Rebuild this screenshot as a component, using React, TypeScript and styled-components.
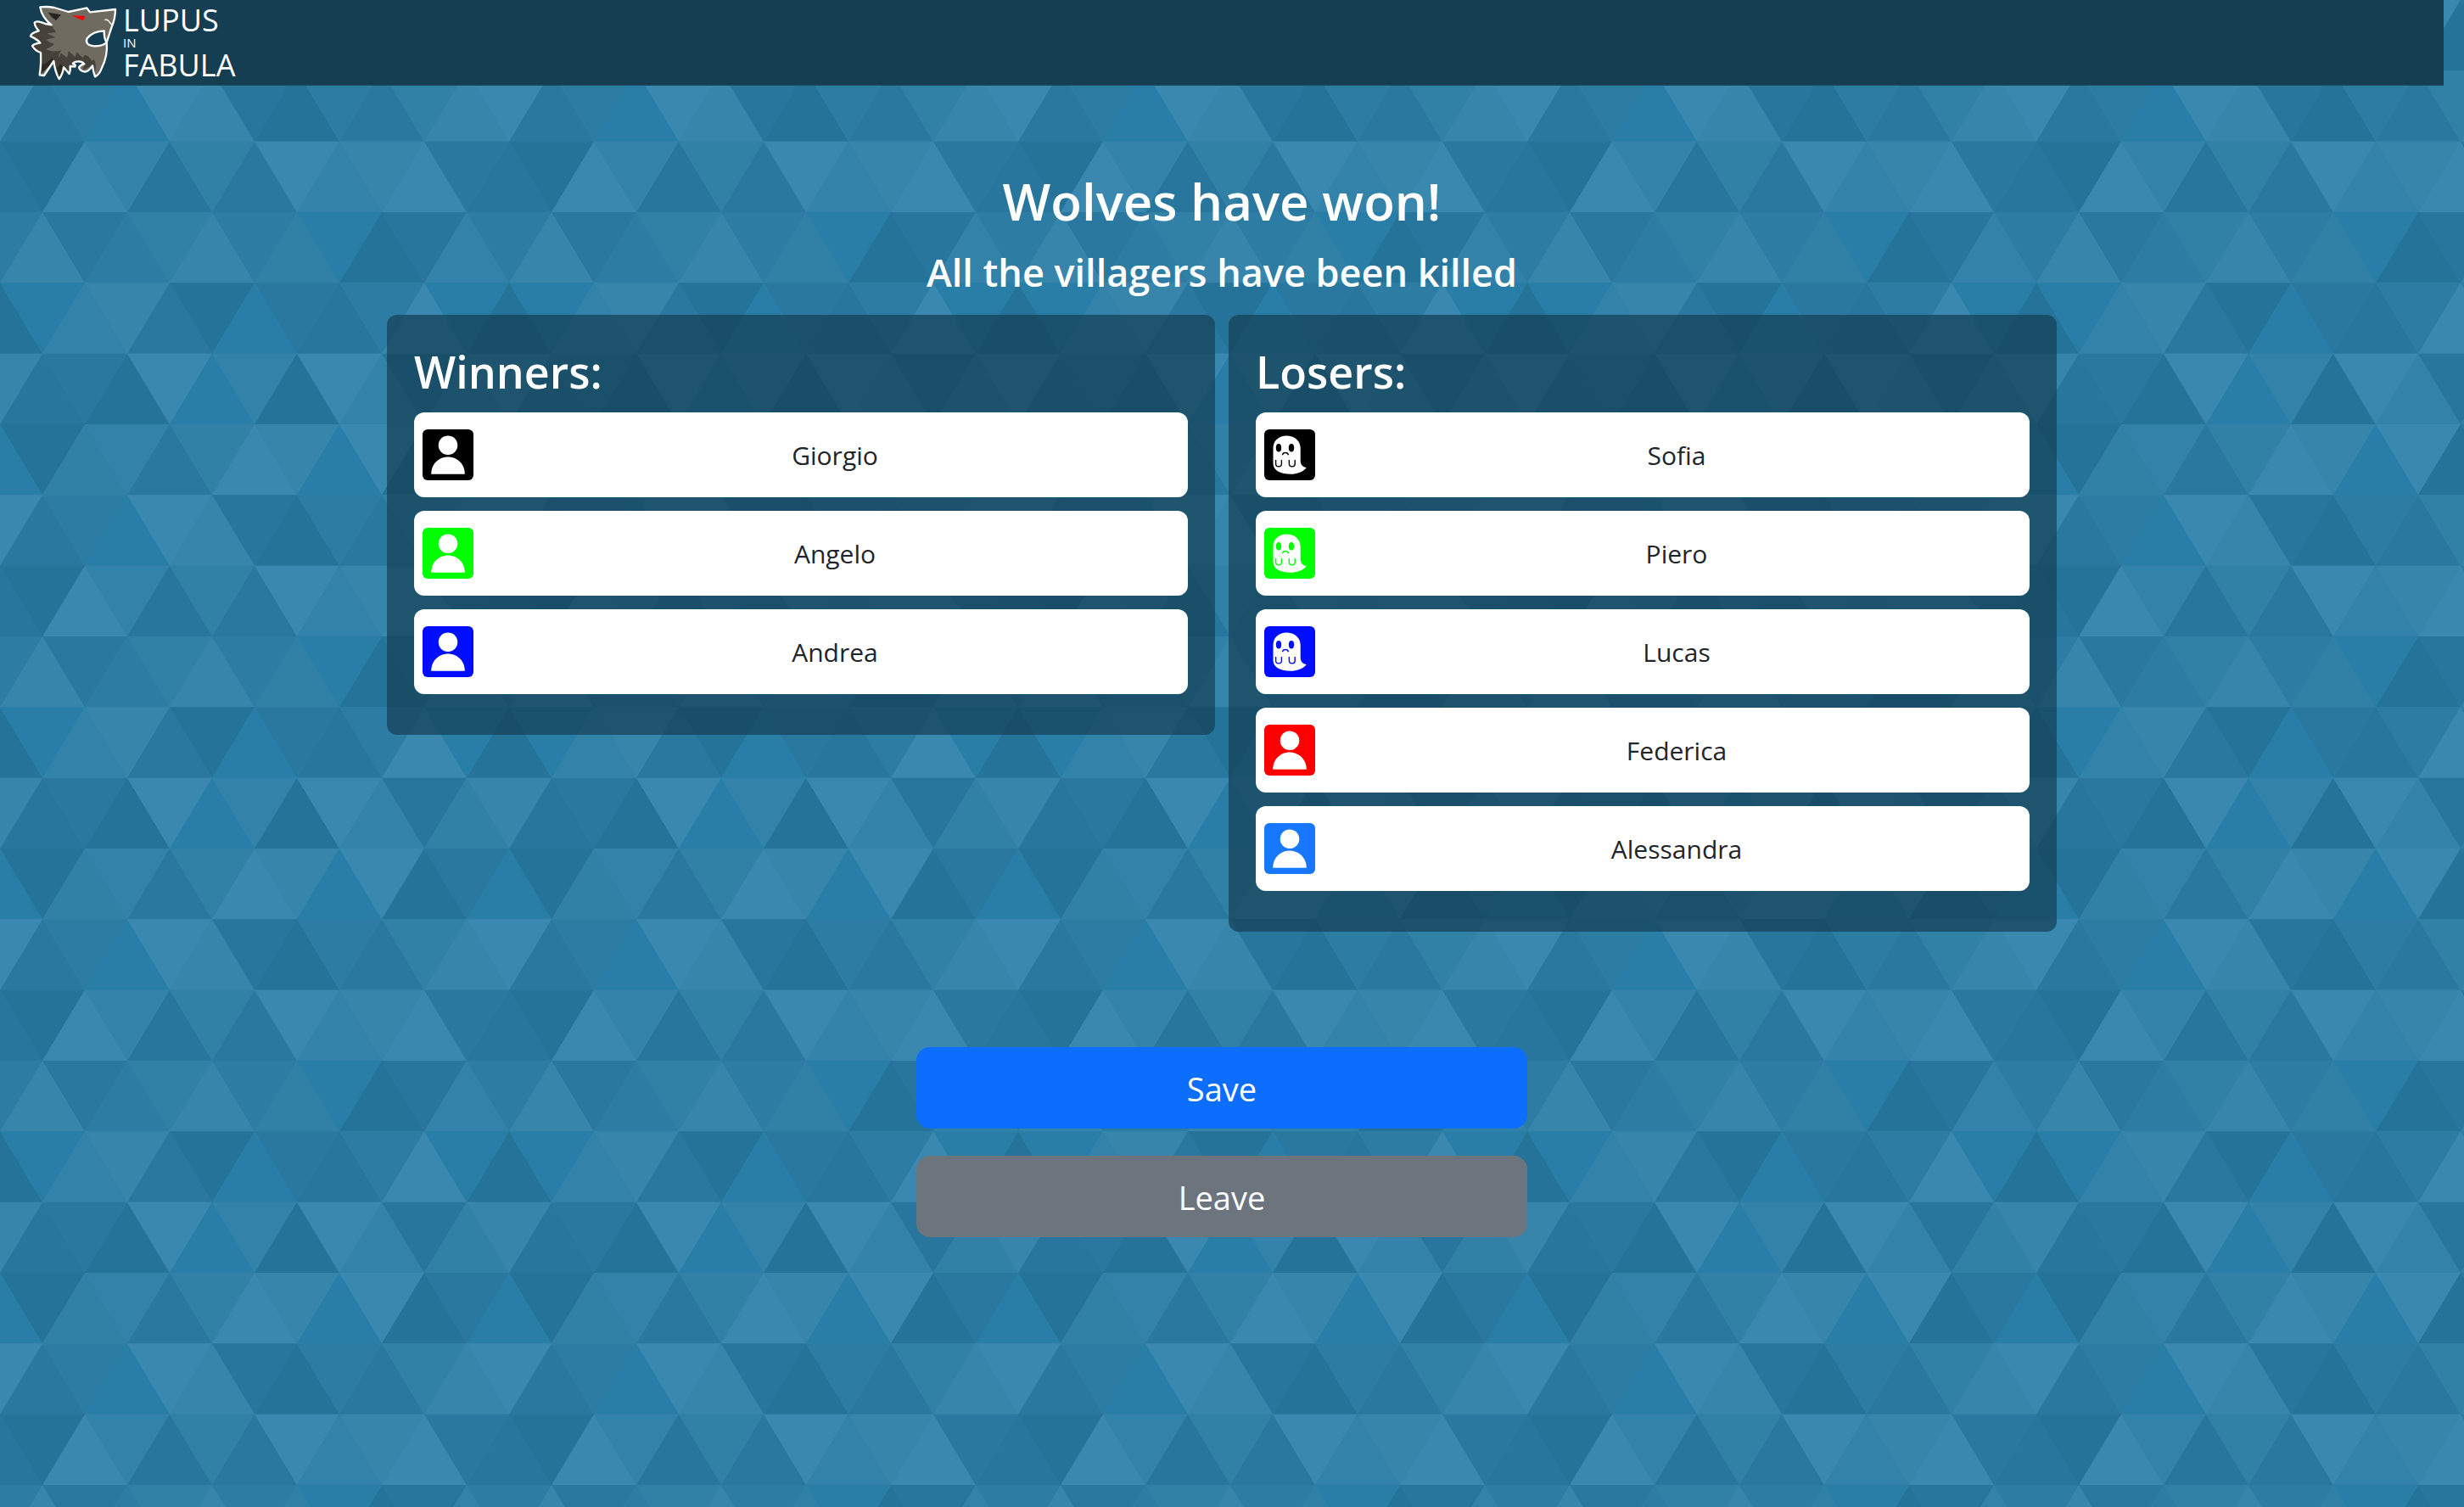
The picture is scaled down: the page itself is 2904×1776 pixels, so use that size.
import React from "react";
import styled, { createGlobalStyle } from "styled-components";

const shades: Record<string, string> = {
  a: "#26739a",
  b: "#28769d",
  c: "#2a789f",
  d: "#2d7ca3",
  e: "#3180a6",
  f: "#3382a9",
  g: "#3885ac",
  h: "#3a88af",
  s: "#287ea7",
};

// Each row alternates upward and downward triangles; odd rows are shifted by half a triangle.
const triangleRows = [
  "saefcehgshac",
  "cdshgbadcegh",
  "bahfbechfghc",
  "gcdegdesabfd",
  "asfgcascbdhs",
  "bcahsfahfbeg",
];

const side = 100;
const rise = 500 / 6;

const buildTile = () => {
  let shapes = "";
  triangleRows.forEach((row, r) => {
    const top = r * rise;
    const bottom = top + rise;
    const shift = r % 2 === 0 ? 0 : side / 2;
    row.split("").forEach((key, i) => {
      const x = Math.floor(i / 2) * side + shift;
      for (const wrap of [-600, 0]) {
        const left = x + wrap;
        const points =
          i % 2 === 0
            ? `${left},${top} ${left + 50},${bottom} ${left - 50},${bottom}`
            : `${left},${top} ${left + 100},${top} ${left + 50},${bottom}`;
        shapes += `<polygon points="${points}" fill="${shades[key]}"/>`;
        if (x === 0 && wrap === 0 && i % 2 === 0) {
          shapes += `<polygon points="600,${top} 650,${bottom} 550,${bottom}" fill="${shades[key]}"/>`;
        }
      }
    });
  });
  return (
    "data:image/svg+xml," +
    encodeURIComponent(
      `<svg xmlns="http://www.w3.org/2000/svg" width="600" height="500" viewBox="0 0 600 500"><rect width="600" height="500" fill="#2f7ea5"/>${shapes}</svg>`
    )
  );
};

const tile = buildTile();

const GlobalStyle = createGlobalStyle`
  *, *::before, *::after { box-sizing: border-box; }
  html { background: #2d7ca3 url("${tile}") 0 0 / 600px 500px repeat; }
  body {
    margin: 0;
    color: #212529;
    font-family: "Open Sans", "Noto Sans", sans-serif;
    font-size: 30px;
    line-height: 48px;
  }
`;

const Page = styled.div`
  min-height: 100vh;
  padding-right: 24px;
`;

const Header = styled.header`
  display: flex;
  align-items: center;
  height: 101px;
  padding: 0 34px;
  background: #153e52;
  border-bottom: 1px solid #1d4c64;
`;

const Brand = styled.a`
  display: flex;
  align-items: center;
  gap: 6px;
  color: #fff;
  text-decoration: none;
`;

const BrandName = styled.span`
  display: flex;
  flex-direction: column;
`;

const BrandWord = styled.span`
  font-size: 36px;
  line-height: 45px;
`;

const BrandSmall = styled.span`
  font-size: 15px;
  line-height: 8px;
`;

const Main = styled.main`
  display: flex;
  flex-direction: column;
  align-items: center;
  padding: 98px 16px 64px;
`;

const Title = styled.h1`
  margin: 0 0 16px;
  color: #fff;
  font-size: 60px;
  font-weight: 600;
  line-height: 77px;
`;

const Subtitle = styled.h2`
  margin: 0 0 22px;
  color: #fff;
  font-size: 45px;
  font-weight: 600;
  line-height: 57px;
`;

const Teams = styled.div`
  display: grid;
  grid-template-columns: 1fr 1fr;
  align-items: start;
  gap: 16px;
  width: 100%;
  max-width: 1968px;
`;

const Panel = styled.section`
  padding: 32px;
  border-radius: 12px;
  background: rgba(20, 62, 84, 0.7);
`;

const PanelTitle = styled.h3`
  margin: 0 0 13px;
  color: #fff;
  font-size: 52px;
  font-weight: 600;
  line-height: 70px;
`;

const PlayerList = styled.ul`
  margin: 0;
  padding: 0;
  list-style: none;
`;

const PlayerRow = styled.li`
  display: flex;
  align-items: center;
  gap: 10px;
  height: 100px;
  margin-bottom: 16px;
  padding-left: 10px;
  border-radius: 12px;
  background: #fff;
`;

const Avatar = styled.svg`
  flex: none;
  width: 60px;
  height: 60px;
  border-radius: 6px;
`;

const PlayerName = styled.span`
  flex: 1;
  padding-top: 2px;
  text-align: center;
`;

const Actions = styled.div`
  display: flex;
  flex-direction: column;
  gap: 32px;
  width: 25vw;
  min-width: 320px;
  max-width: 720px;
  margin-top: 136px;
`;

const ActionButton = styled.button<{ $color: string }>`
  height: 96px;
  padding: 2px 16px 0;
  border: 0;
  border-radius: 16px;
  background: ${(p) => p.$color};
  color: #fff;
  font: inherit;
  font-size: 38px;
  cursor: pointer;
`;

const WolfLogo = () => (
  <svg width="105" height="90" viewBox="100 15 315 270" aria-hidden="true">
    <path
      d="M140 25Q165 22 190 27L240 42L305 28L316 43L406 33Q406 65 392 98L375 150Q380 195 358 240Q350 264 334 271Q328 255 325 232Q312 252 299 254Q280 252 277 238Q284 228 296 226Q286 214 268 218Q254 222 256 226Q268 228 263 236L246 234Q248 250 243 261L223 238Q220 262 207 279Q192 254 188 216Q172 240 154 267L138 265Q144 230 142 186Q122 180 112 162Q120 154 140 152Q134 142 106 128Q108 116 135 109Q122 96 120 80Q128 70 158 84L180 88Q146 62 140 25Z"
      fill="#706b60"
    />
    <path
      d="M180 90L158 84Q128 70 122 80Q124 96 138 109Q112 116 108 128L140 152L114 162Q124 180 144 186L142 262L188 216L207 275L223 238L242 258L246 234L262 234L258 222Q276 214 298 226L290 248L325 232L332 262Q342 230 330 210L322 216Q314 196 298 194L290 204L270 184L264 202L240 180L236 204L214 188L206 204Q204 190 216 178Q180 186 160 174Q184 164 190 156Q174 150 160 140L194 132L164 118L196 114Z"
      fill="#46423a"
    />
    <path d="M142 262L188 216L182 204Q156 232 148 226ZM200 240L207 275L223 238L212 226Z" fill="#2b2923" />
    <path d="M168 44L214 52L196 72Q180 62 168 44Z" fill="#25231f" />
    <path d="M252 55L299 57L292 73Z" fill="#f00" />
    <path
      d="M366 109Q326 110 306 136Q296 158 330 163Q360 164 375 150Q366 138 366 109Z"
      fill="#153e52"
      stroke="#fff"
      strokeWidth="7"
      strokeLinejoin="round"
    />
    <path d="M368 71Q374 68 381 73Q386 80 394 88" fill="none" stroke="#fff" strokeWidth="4" />
    <path
      d="M140 25Q165 22 190 27L240 42L305 28L316 43L406 33Q406 65 392 98L375 150Q380 195 358 240Q350 264 334 271Q328 255 325 232Q312 252 299 254Q280 252 277 238Q284 228 296 226Q286 214 268 218Q254 222 256 226Q268 228 263 236L246 234Q248 250 243 261L223 238Q220 262 207 279Q192 254 188 216Q172 240 154 267L138 265Q144 230 142 186Q122 180 112 162Q120 154 140 152Q134 142 106 128Q108 116 135 109Q122 96 120 80Q128 70 158 84L180 88Q146 62 140 25Z"
      fill="none"
      stroke="#fff"
      strokeWidth="7"
      strokeLinejoin="round"
    />
  </svg>
);

const PersonAvatar = ({ color }: { color: string }) => (
  <Avatar viewBox="0 0 60 60" aria-hidden="true">
    <rect width="60" height="60" fill={color} />
    <circle cx="30" cy="18.8" r="11.3" fill="#fff" />
    <path d="M10.2 52.8C10.2 41 19 32.6 30 32.6S49.8 41 49.8 52.8Z" fill="#fff" />
  </Avatar>
);

const GhostAvatar = ({ color }: { color: string }) => (
  <Avatar viewBox="0 0 60 60" aria-hidden="true">
    <rect width="60" height="60" fill={color} />
    <path
      d="M10.5 22C10.5 13 17.5 7.4 26.5 7.4S42.7 14 42.7 22V37C42.7 41.5 45.5 44.6 49.8 45C46 50 39 52.8 31 52.8C20 52.8 10.5 49 10.5 40Z"
      fill="#fff"
    />
    <ellipse cx="17" cy="21.8" rx="3.2" ry="4.8" fill={color} />
    <ellipse cx="32" cy="21.8" rx="3.2" ry="4.8" fill={color} />
    <path
      d="M21.4 30.2C22.4 26.6 27.4 26.6 28.6 30.2M13.6 36V40.5C13.6 45 20.4 45 20.4 40.5V36M29.4 36V40.5C29.4 45 36.2 45 36.2 40.5V36"
      fill="none"
      stroke={color}
      strokeWidth="1.4"
    />
  </Avatar>
);

type Player = { name: string; color: string; dead?: boolean };

const winners: Player[] = [
  { name: "Giorgio", color: "#000" },
  { name: "Angelo", color: "#0f0" },
  { name: "Andrea", color: "#000dff" },
];

const losers: Player[] = [
  { name: "Sofia", color: "#000", dead: true },
  { name: "Piero", color: "#0f0", dead: true },
  { name: "Lucas", color: "#000dff", dead: true },
  { name: "Federica", color: "#f00" },
  { name: "Alessandra", color: "#1877ff" },
];

const Team = ({ title, players }: { title: string; players: Player[] }) => (
  <Panel>
    <PanelTitle>{title}</PanelTitle>
    <PlayerList>
      {players.map((p) => (
        <PlayerRow key={p.name}>
          {p.dead ? <GhostAvatar color={p.color} /> : <PersonAvatar color={p.color} />}
          <PlayerName>{p.name}</PlayerName>
        </PlayerRow>
      ))}
    </PlayerList>
  </Panel>
);

export default function App() {
  return (
    <>
      <GlobalStyle />
      <Page>
        <Header>
          <Brand href="#">
            <WolfLogo />
            <BrandName>
              <BrandWord>LUPUS</BrandWord>
              <BrandSmall>IN</BrandSmall>
              <BrandWord>FABULA</BrandWord>
            </BrandName>
          </Brand>
        </Header>
        <Main>
          <Title>Wolves have won!</Title>
          <Subtitle>All the villagers have been killed</Subtitle>
          <Teams>
            <Team title="Winners:" players={winners} />
            <Team title="Losers:" players={losers} />
          </Teams>
          <Actions>
            <ActionButton type="button" $color="#0d6efd">
              Save
            </ActionButton>
            <ActionButton type="button" $color="#6c757d">
              Leave
            </ActionButton>
          </Actions>
        </Main>
      </Page>
    </>
  );
}
